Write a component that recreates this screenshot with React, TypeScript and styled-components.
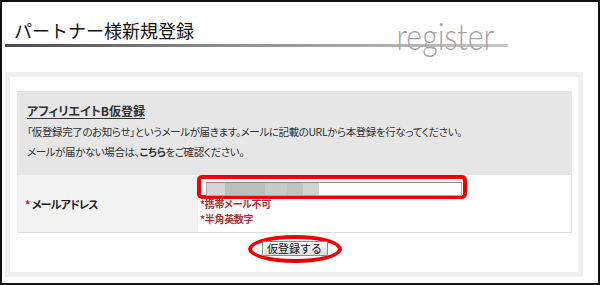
import React from "react";
import styled, { createGlobalStyle } from "styled-components";

const GlobalStyle = createGlobalStyle`
  html, body {
    margin: 0;
    padding: 0;
    background: #fff;
  }
  body {
    font-family: "Noto Sans CJK JP", "Noto Sans", sans-serif;
    color: #222;
  }
`;

const Frame = styled.div`
  box-sizing: border-box;
  width: 600px;
  height: 285px;
  border: 2px solid #111;
  overflow: hidden;
`;

const Header = styled.div`
  width: 503px;
  height: 42px;
  margin-left: 3px;
  display: flex;
  align-items: flex-end;
  justify-content: space-between;
  border-bottom: 3px solid;
  border-image: linear-gradient(to right, #4a4a4a 0%, #8a8a8a 40%, #c8c8c8 100%) 1;
`;

const Title = styled.h1`
  margin: 0 0 3px 9px;
  font-size: 18px;
  font-weight: 400;
  line-height: 22px;
  color: #111;
`;

const Register = styled.span`
  margin: 0 14px -10px 0;
  font-family: "Lato", "Liberation Sans", sans-serif;
  font-weight: 300;
  font-size: 37px;
  line-height: 37px;
  color: #a4a4a4;
  transform: scaleX(0.82);
  transform-origin: right bottom;
`;

const Panel = styled.div`
  box-sizing: border-box;
  width: 578px;
  height: 205px;
  margin: 25px 0 0 3px;
  border: 5px solid #f0f0f0;
  padding: 14px 6px 0 7px;
  background: #fff;
`;

const Table = styled.div`
  width: 555px;
`;

const Intro = styled.div`
  box-sizing: border-box;
  height: 84px;
  padding: 11px 10px 0;
  background: #e6e6e6;
  font-feature-settings: "palt";
`;

const SectionTitle = styled.h2`
  margin: 0 0 2px;
  font-size: 12px;
  font-weight: 700;
  line-height: 18px;
  color: #333;
  text-decoration: underline;
  text-underline-offset: 2px;
`;

const Text = styled.p`
  margin: 0;
  font-size: 10.5px;
  line-height: 20px;
  letter-spacing: -0.4px;
  color: #333;
`;

const Strong = styled.b`
  font-weight: 700;
`;

const Row = styled.div`
  display: grid;
  grid-template-columns: 181px 1fr;
  height: 58px;
  border-bottom: 1px solid #dedede;
  border-right: 1px solid #dedede;
  box-sizing: border-box;
  font-feature-settings: "palt";
`;

const Label = styled.div`
  display: flex;
  align-items: center;
  padding-left: 8px;
  background: #f2f2f2;
  font-size: 11px;
  font-weight: 700;
  letter-spacing: -0.8px;
  color: #222;
`;

const Required = styled.span`
  color: #c0282d;
  margin-right: 2px;
`;

const Value = styled.div`
  display: flex;
  flex-direction: column;
`;

const Highlight = styled.div`
  box-sizing: border-box;
  width: 270px;
  height: 24px;
  margin: 0 0 -3px -1px;
  padding: 3px 0 0 5px;
  border: 4px solid #ee0000;
  border-radius: 5px;
`;

const Field = styled.div`
  box-sizing: border-box;
  width: 256px;
  height: 14px;
  border: 1px solid #a8a8a8;
  border-top-color: #8a8a8a;
  background:
    linear-gradient(
      to right,
      #d6d6d6 0px, #d6d6d6 18px,
      #bdbdbd 18px, #bdbdbd 58px,
      #c9c9c9 58px, #c9c9c9 80px,
      #c2c2c2 80px, #c2c2c2 96px,
      #d2d2d2 96px, #d2d2d2 112px,
      #fff 112px
    );
`;

const Hint = styled.div`
  margin-left: 2px;
  font-size: 10px;
  font-weight: 700;
  line-height: 15px;
  letter-spacing: -0.3px;
  color: #a8333a;
`;

const Actions = styled.div`
  display: flex;
  justify-content: center;
  padding-top: 2px;
`;

const Ring = styled.div`
  box-sizing: border-box;
  width: 94px;
  height: 28px;
  display: flex;
  align-items: center;
  justify-content: center;
  border: 4px solid #ee0000;
  border-radius: 50%;
`;

const Button = styled.button`
  box-sizing: border-box;
  width: 66px;
  height: 15px;
  padding: 0;
  margin-top: -1px;
  border: 1px solid #8c8c8c;
  border-radius: 1px;
  background: linear-gradient(#fbfbfb, #dcdcdc);
  box-shadow: inset 1px 1px 0 #fff;
  font-family: "Noto Sans CJK JP", sans-serif;
  font-size: 11px;
  line-height: 13px;
  color: #111;
`;

export default function App() {
  return (
    <>
      <GlobalStyle />
      <Frame>
        <Header>
          <Title>パートナー様新規登録</Title>
          <Register>register</Register>
        </Header>
        <Panel>
          <Table>
            <Intro>
              <SectionTitle>アフィリエイトB仮登録</SectionTitle>
              <Text>「仮登録完了のお知らせ」というメールが届きます。メールに記載のURLから本登録を行なってください。</Text>
              <Text>
                メールが届かない場合は、<Strong>こちら</Strong>をご確認ください。
              </Text>
            </Intro>
            <Row>
              <Label>
                <Required>*</Required>メールアドレス
              </Label>
              <Value>
                <Highlight>
                  <Field />
                </Highlight>
                <Hint>*携帯メール不可</Hint>
                <Hint>*半角英数字</Hint>
              </Value>
            </Row>
            <Actions>
              <Ring>
                <Button type="button">仮登録する</Button>
              </Ring>
            </Actions>
          </Table>
        </Panel>
      </Frame>
    </>
  );
}
